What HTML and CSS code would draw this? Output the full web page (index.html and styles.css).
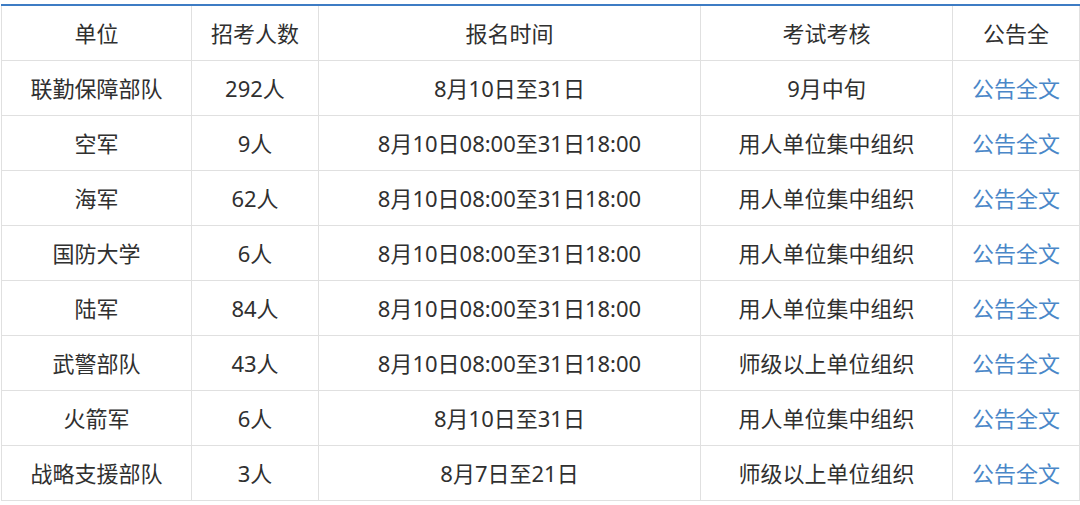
FILE: index.html
```html
<!DOCTYPE html>
<html lang="zh">
<head>
<meta charset="utf-8">
<link rel="stylesheet" href="styles.css">
</head>
<body>
<div class="wrap">
<table class="grid">
  <colgroup>
    <col class="c1"><col class="c2"><col class="c3"><col class="c4"><col class="c5">
  </colgroup>
  <thead>
    <tr><th>单位</th><th>招考人数</th><th>报名时间</th><th>考试考核</th><th>公告全</th></tr>
  </thead>
  <tbody>
    <tr><td>联勤保障部队</td><td>292人</td><td>8月10日至31日</td><td>9月中旬</td><td><a class="link">公告全文</a></td></tr>
    <tr><td>空军</td><td>9人</td><td>8月10日08:00至31日18:00</td><td>用人单位集中组织</td><td><a class="link">公告全文</a></td></tr>
    <tr><td>海军</td><td>62人</td><td>8月10日08:00至31日18:00</td><td>用人单位集中组织</td><td><a class="link">公告全文</a></td></tr>
    <tr><td>国防大学</td><td>6人</td><td>8月10日08:00至31日18:00</td><td>用人单位集中组织</td><td><a class="link">公告全文</a></td></tr>
    <tr><td>陆军</td><td>84人</td><td>8月10日08:00至31日18:00</td><td>用人单位集中组织</td><td><a class="link">公告全文</a></td></tr>
    <tr><td>武警部队</td><td>43人</td><td>8月10日08:00至31日18:00</td><td>师级以上单位组织</td><td><a class="link">公告全文</a></td></tr>
    <tr><td>火箭军</td><td>6人</td><td>8月10日至31日</td><td>用人单位集中组织</td><td><a class="link">公告全文</a></td></tr>
    <tr><td>战略支援部队</td><td>3人</td><td>8月7日至21日</td><td>师级以上单位组织</td><td><a class="link">公告全文</a></td></tr>
  </tbody>
</table>
</div>
</body>
</html>
```

FILE: styles.css
```css
html, body {
  margin: 0;
  padding: 0;
  background: #ffffff;
}
.wrap {
  padding: 4px 0 0 1px;
}
.grid {
  width: 1078px;
  border-collapse: collapse;
  table-layout: fixed;
  border-top: 2px solid #3d7cc4;
  font-family: "Noto Sans", "Noto Sans CJK SC", "Microsoft YaHei", sans-serif;
  font-size: 22px;
  color: #303030;
}
.c1 { width: 190px; }
.c2 { width: 127px; }
.c3 { width: 382px; }
.c4 { width: 252px; }
.c5 { width: 127px; }
.grid th, .grid td {
  border: 1px solid #e0e0e0;
  height: 52px;
  padding: 0 0 2px 0;
  text-align: center;
  vertical-align: middle;
  font-weight: normal;
  white-space: nowrap;
  overflow: hidden;
}
.grid thead th {
  border-top: none;
}
.link {
  color: #4a87c8;
  text-decoration: none;
}
```
